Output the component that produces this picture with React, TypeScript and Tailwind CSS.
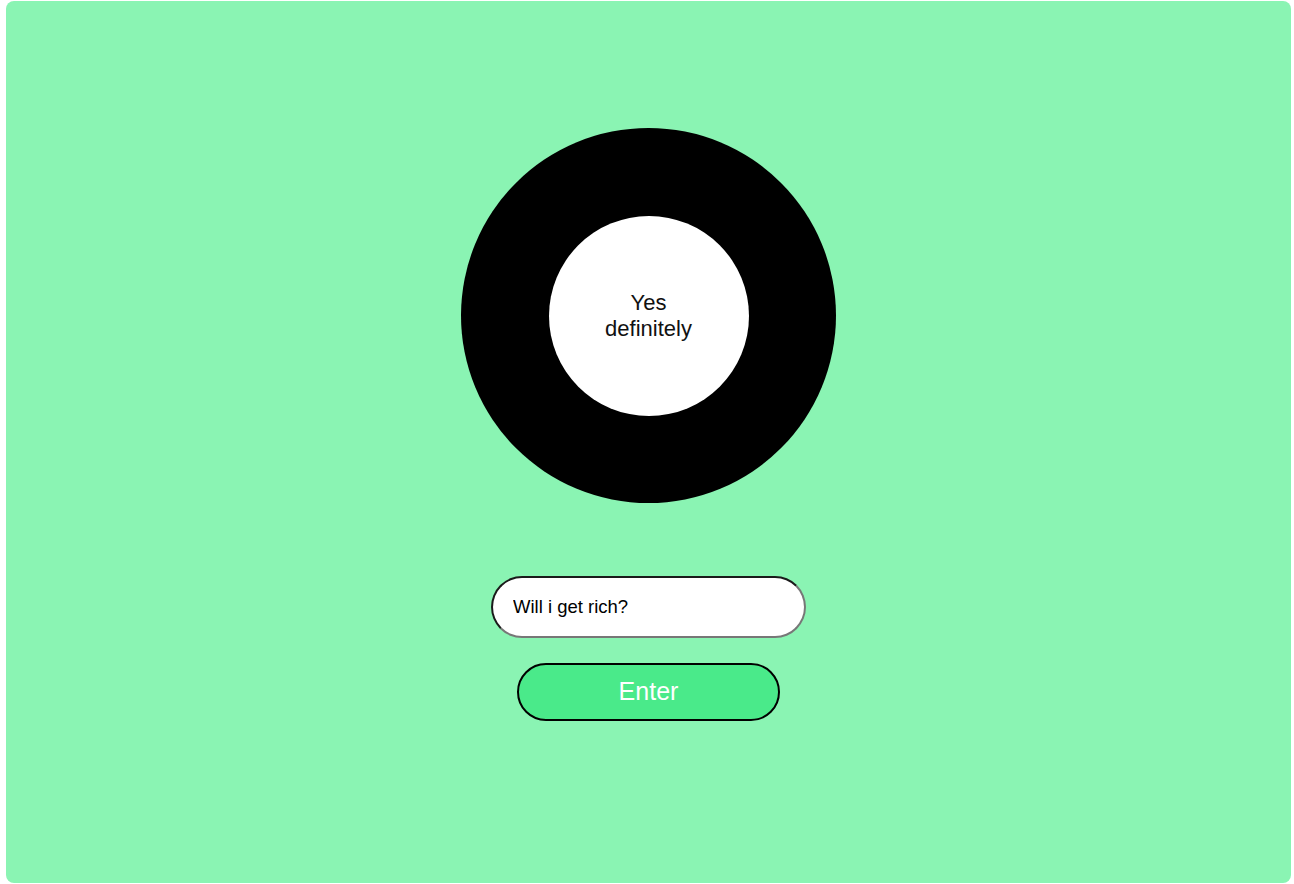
import { useState } from "react";

const answers = ["Yes definitely", "It is certain", "Ask again later", "Don't count on it", "Most likely"];

export default function App() {
  const [question, setQuestion] = useState("Will i get rich?");
  const [answer, setAnswer] = useState("Yes definitely");

  return (
    <div className="h-screen bg-white pl-[6px] pr-[3px] py-[1px] font-['Liberation_Sans',Arial,sans-serif]">
      <div className="flex h-full flex-col items-center rounded-lg bg-[#8af4b3] pt-[127px]">
        <div className="flex h-[375px] w-[375px] items-center justify-center rounded-full bg-black">
          <div className="flex h-[200px] w-[200px] items-center justify-center rounded-full bg-white px-6 text-center text-[22px] leading-[26px] text-[#111]">
            <span className="w-[100px]">{answer}</span>
          </div>
        </div>
        <input
          className="mt-[73px] h-[62px] w-[315px] rounded-full border-2 border-t-[#1a1a1a] border-l-[#1a1a1a] border-r-[#777] border-b-[#777] bg-white px-5 text-[18.5px] text-black outline-none"
          value={question}
          onChange={(e) => setQuestion(e.target.value)}
        />
        <button
          className="mt-[25px] h-[58px] w-[263px] rounded-full border-2 border-black bg-[#4aea8a] text-[25px] text-white"
          onClick={() => setAnswer(answers[Math.floor(Math.random() * answers.length)])}
        >
          Enter
        </button>
      </div>
    </div>
  );
}
